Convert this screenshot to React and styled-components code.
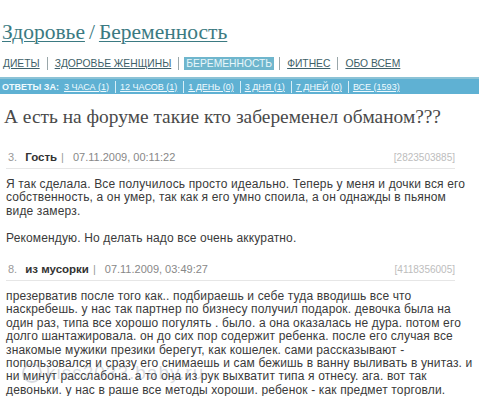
import React from 'react';
import styled, { createGlobalStyle } from 'styled-components';

const GlobalStyle = createGlobalStyle`
  html, body {
    margin: 0;
    padding: 0;
    background: #fff;
  }
  body {
    font-family: "Liberation Sans", Arial, sans-serif;
    overflow: hidden;
  }
`;

const navItems = [
  { label: 'ДИЕТЫ' },
  { label: 'ЗДОРОВЬЕ ЖЕНЩИНЫ' },
  { label: 'БЕРЕМЕННОСТЬ', active: true },
  { label: 'ФИТНЕС' },
  { label: 'ОБО ВСЕМ' },
];

const periods = ['3 ЧАСА (1)', '12 ЧАСОВ (1)', '1 ДЕНЬ (0)', '3 ДНЯ (1)', '7 ДНЕЙ (0)', 'ВСЕ (1593)'];

const posts = [
  {
    num: '3.',
    author: 'Гость',
    date: '07.11.2009, 00:11:22',
    id: '[2823503885]',
    lines: [
      'Я так сделала. Все получилось просто идеально. Теперь у меня и дочки вся его',
      'собственность, а он умер, так как я его умно споила, а он однажды в пьяном',
      'виде замерз.',
      '',
      'Рекомендую. Но делать надо все очень аккуратно.',
    ],
  },
  {
    num: '8.',
    author: 'из мусорки',
    date: '07.11.2009, 03:49:27',
    id: '[4118356005]',
    lines: [
      'презерватив после того как.. подбираешь и себе туда вводишь все что',
      'наскребешь. у нас так партнер по бизнесу получил подарок. девочка была на',
      'один раз, типа все хорошо погулять . было. а она оказалась не дура. потом его',
      'долго шантажировала. он до сих пор содержит ребенка. после его случая все',
      'знакомые мужики презики берегут, как кошелек. сами рассказывают -',
      'попользовался и сразу его снимаешь и сам бежишь в ванну выливать в унитаз. и',
      'ни минут расслабона. а то она из рук выхватит типа я отнесу. ага. вот так',
      'девоньки. у нас в раше все методы хороши. ребенок - как предмет торговли.',
    ],
  },
];

const App = () => {
  return (
    <Page>
      <GlobalStyle />
      <Crumbs>
        <CrumbLink>Здоровье</CrumbLink>
        <CrumbSep>/</CrumbSep>
        <CrumbLink>Беременность</CrumbLink>
      </Crumbs>
      <Nav>
        {navItems.map((item, i) => (
          <React.Fragment key={item.label}>
            {i > 0 && <NavSep />}
            <NavLink $active={item.active}>{item.label}</NavLink>
          </React.Fragment>
        ))}
      </Nav>
      <Bar>
        <BarLabel>ОТВЕТЫ ЗА:</BarLabel>
        {periods.map((p, i) => (
          <React.Fragment key={p}>
            {i > 0 && <BarSep />}
            <BarLink>{p}</BarLink>
          </React.Fragment>
        ))}
      </Bar>
      <Question>А есть на форуме такие кто забеременел обманом???</Question>
      {posts.map((post) => (
        <Post key={post.id}>
          <PostHead>
            <PostMeta>
              <PostNum>{post.num}</PostNum>
              <Author>{post.author}</Author>
              <MetaSep>|</MetaSep>
              <PostDate>{post.date}</PostDate>
            </PostMeta>
            <PostId>{post.id}</PostId>
          </PostHead>
          <PostBody>
            {post.lines.map((line, i) => (
              <Line key={i}>{line || '\u00a0'}</Line>
            ))}
          </PostBody>
        </Post>
      ))}
      <Watermark>
        <WatermarkRing />
        kiss2033.baby.ru
      </Watermark>
    </Page>
  );
};

const Page = styled.div`
  position: relative;
  width: 480px;
  height: 396px;
  overflow: hidden;
  background: #fff;
`;

const Crumbs = styled.div`
  display: flex;
  align-items: baseline;
  gap: 4px;
  padding: 19px 0 0 2px;
  font-family: "Liberation Serif", "Times New Roman", serif;
  font-size: 21.5px;
  line-height: 26px;
  color: #3b7a82;
`;

const CrumbLink = styled.span`
  text-decoration: underline;
  text-decoration-thickness: 1px;
  text-underline-offset: 2px;
`;

const CrumbSep = styled.span`
  color: #3b7a82;
`;

const Nav = styled.div`
  display: flex;
  align-items: center;
  gap: 5px;
  margin-top: 11px;
  padding-left: 1px;
  height: 15px;
  font-size: 10.3px;
`;

const NavLink = styled.span`
  padding: 1px 2px;
  color: ${(p) => (p.$active ? '#e8f6fb' : '#3e5f68')};
  background: ${(p) => (p.$active ? '#6fb6cd' : 'transparent')};
  text-decoration: ${(p) => (p.$active ? 'none' : 'underline')};
`;

const NavSep = styled.span`
  width: 1px;
  height: 13px;
  background: #9aa7aa;
`;

const Bar = styled.div`
  display: flex;
  align-items: center;
  gap: 4px;
  margin-top: 6px;
  width: 477px;
  height: 15px;
  padding-left: 2px;
  border-top: 2px solid #8cc3d6;
  background: #5fb1d3;
  font-size: 9px;
  color: #f0fbff;
`;

const BarLabel = styled.span`
  font-weight: bold;
  margin-right: 1px;
`;

const BarLink = styled.span`
  text-decoration: underline;
`;

const BarSep = styled.span`
  width: 1px;
  height: 12px;
  background: #d8eef7;
  margin-left: 2px;
`;

const Question = styled.h1`
  margin: 11px 0 0 4px;
  font-family: "Liberation Serif", "Times New Roman", serif;
  font-weight: normal;
  font-size: 19.4px;
  line-height: 24px;
  color: #4a4a4a;
`;

const Post = styled.div`
  margin: 22px 0 0 6px;
  width: 449px;
  & + & {
    margin-top: 18px;
  }
`;

const PostHead = styled.div`
  display: flex;
  justify-content: space-between;
  align-items: baseline;
  padding-bottom: 5px;
  border-bottom: 1px solid #e6e6e6;
`;

const PostMeta = styled.div`
  display: flex;
  align-items: baseline;
  font-size: 11px;
  color: #888;
`;

const PostNum = styled.span`
  margin: 0 8px 0 2px;
  color: #999;
`;

const Author = styled.span`
  font-weight: bold;
  font-size: 11.5px;
  color: #333;
`;

const MetaSep = styled.span`
  margin: 0 9px 0 4px;
  color: #999;
`;

const PostDate = styled.span`
  color: #888;
`;

const PostId = styled.span`
  font-size: 10px;
  color: #bdbdbd;
`;

const PostBody = styled.div`
  padding-top: 9px;
  font-size: 12px;
  letter-spacing: 0.15px;
  line-height: 13.4px;
  color: #3a3a3a;
`;

const Line = styled.div`
  white-space: nowrap;
`;

const Watermark = styled.div`
  position: absolute;
  left: 22px;
  top: 362px;
  display: flex;
  align-items: center;
  gap: 4px;
  font-size: 19px;
  color: rgba(120, 130, 150, 0.3);
  letter-spacing: 1px;
  pointer-events: none;
`;

const WatermarkRing = styled.span`
  width: 16px;
  height: 16px;
  border-radius: 50%;
  border: 2px solid rgba(120, 130, 150, 0.3);
`;

export default App;
